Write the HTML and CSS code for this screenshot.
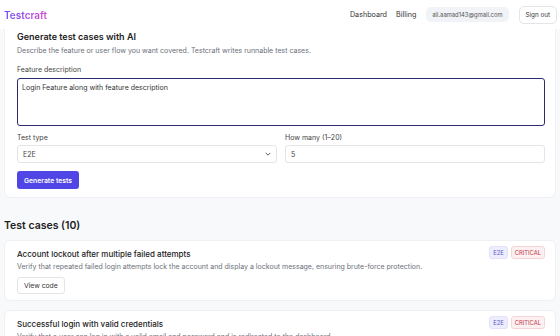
FILE: index.html
```html
<!DOCTYPE html>
<html>
  <head>
    <title>Testcraft</title>
    <meta name="viewport" content="width=device-width, initial-scale=1" />
    <link rel="stylesheet" href="styles.css">
  </head>
  <body>
    <header class="topbar">
      <a class="logo" href="#">Testcraft</a>
      <nav class="nav">
        <a href="#">Dashboard</a>
        <a href="#">Billing</a>
        <span class="user-pill">ali.aamad143@gmail.com</span>
        <button class="btn-outline">Sign out</button>
      </nav>
    </header>

    <main class="page">
      <section class="card generator">
        <h2>Generate test cases with AI</h2>
        <p class="muted">Describe the feature or user flow you want covered. Testcraft writes runnable test cases.</p>

        <label class="field-label">Feature description</label>
        <textarea class="textarea">Login Feature along with feature description</textarea>

        <div class="row">
          <div class="field">
            <label class="field-label">Test type</label>
            <div class="select">
              <span>E2E</span>
              <svg width="8" height="8" viewBox="0 0 10 10"><path d="M2.5 4 L5 6.5 L7.5 4" fill="none" stroke="#555" stroke-width="1.2" stroke-linecap="round" stroke-linejoin="round"/></svg>
            </div>
          </div>
          <div class="field">
            <label class="field-label">How many (1–20)</label>
            <div class="input">5</div>
          </div>
        </div>

        <button class="btn-primary">Generate tests</button>
      </section>

      <h3 class="section-title">Test cases (10)</h3>

      <article class="card case">
        <div class="case-head">
          <h4>Account lockout after multiple failed attempts</h4>
          <div class="badges">
            <span class="badge badge-type">E2E</span>
            <span class="badge badge-crit">CRITICAL</span>
          </div>
        </div>
        <p class="muted">Verify that repeated failed login attempts lock the account and display a lockout message, ensuring brute-force protection.</p>
        <button class="btn-outline btn-code">View code</button>
      </article>

      <article class="card case">
        <div class="case-head">
          <h4>Successful login with valid credentials</h4>
          <div class="badges">
            <span class="badge badge-type">E2E</span>
            <span class="badge badge-crit">CRITICAL</span>
          </div>
        </div>
        <p class="muted">Verify that a user can log in with a valid email and password and is redirected to the dashboard.</p>
        <button class="btn-outline btn-code">View code</button>
      </article>
    </main>
  </body>
</html>
```

FILE: styles.css
```css
* {
  padding: 0;
  margin: 0;
  box-sizing: border-box;
  font-family: "Inter", "Liberation Sans", sans-serif;
}
body {
  background-color: #f8f9fb;
  color: #1f2328;
  overflow: hidden;
}
.topbar {
  height: 29px;
  background-color: #ffffff;
  display: flex;
  align-items: center;
  justify-content: space-between;
  padding: 0 3px 0 4px;
}
.logo {
  font-size: 10px;
  font-weight: 600;
  text-decoration: none;
  background: linear-gradient(90deg, #6d4cf5, #d94bd6);
  -webkit-background-clip: text;
  background-clip: text;
  color: transparent;
}
.nav {
  display: flex;
  align-items: center;
  gap: 10px;
}
.nav a {
  font-size: 7.2px;
  color: #333;
  text-decoration: none;
}
.nav a + a {
  margin-left: -1px;
}
.user-pill {
  font-size: 5.85px;
  color: #555;
  background-color: #f1f3f6;
  border-radius: 5px;
  padding: 4px 6px;
}
.btn-outline {
  font-size: 6.3px;
  color: #333;
  background-color: #ffffff;
  border: 1px solid #e3e5e9;
  border-radius: 5px;
  padding: 4px 6px;
}
.page {
  padding: 0 4px;
}
.card {
  background-color: #ffffff;
  border: 1px solid #eef0f3;
  border-radius: 6px;
}
.generator {
  border-top: none;
  border-radius: 0 0 6px 6px;
  padding: 2px 10px 8px 12px;
}
.generator h2 {
  font-size: 9px;
  font-weight: 600;
  color: #222;
  line-height: 12px;
}
.muted {
  font-size: 7px;
  color: #6b7079;
  line-height: 10px;
}
.generator .muted {
  margin-top: 3px;
}
.field-label {
  display: block;
  font-size: 7px;
  color: #444;
  margin: 9px 0 4px;
}
.textarea {
  display: block;
  width: 100%;
  height: 48px;
  resize: none;
  border: 1.5px solid #2e2a6e;
  border-radius: 3px;
  padding: 4px 4px;
  font-size: 7px;
  color: #333;
  outline: none;
}
.row {
  display: flex;
  gap: 8px;
}
.row .field {
  flex: 1;
}
.row .field-label {
  margin-top: 7px;
  margin-bottom: 3px;
}
.select,
.input {
  height: 18px;
  border: 1px solid #e3e5e9;
  border-radius: 3px;
  display: flex;
  align-items: center;
  justify-content: space-between;
  padding: 0 4px 0 5px;
  font-size: 7px;
  color: #444;
}
.btn-primary {
  margin-top: 8px;
  font-size: 6.8px;
  font-weight: 600;
  color: #ffffff;
  background-color: #4f46e5;
  border: none;
  border-radius: 3px;
  height: 18px;
  padding: 0 7px;
}
.section-title {
  font-size: 10.5px;
  font-weight: 600;
  color: #222;
  margin: 21px 0 8px;
}
.case {
  padding: 5px 10px 6px 12px;
  margin-bottom: 9px;
}
.case-head {
  display: flex;
  justify-content: space-between;
  align-items: center;
}
.case h4 {
  font-size: 8px;
  font-weight: 500;
  color: #222;
  margin-top: 2px;
}
.case .muted {
  margin-top: 3px;
}
.badges {
  display: flex;
  gap: 3px;
}
.badge {
  font-size: 5.8px;
  border-radius: 3px;
  padding: 2px 3px;
  border: 1px solid transparent;
}
.badge-type {
  color: #5b57c9;
  background-color: #eeedfd;
  border-color: #e3e1fb;
}
.badge-crit {
  color: #c0394b;
  background-color: #fdf0f1;
  border-color: #f6d3d7;
}
.btn-code {
  margin-top: 5px;
  font-size: 6.8px;
  height: 17px;
  padding: 0 6px;
  border-radius: 3px;
}
```
